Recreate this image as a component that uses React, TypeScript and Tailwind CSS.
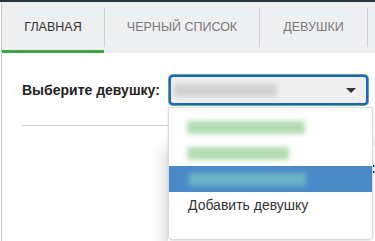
const tabs = [
  { label: "ГЛАВНАЯ", width: "w-[102px]", active: true },
  { label: "ЧЕРНЫЙ СПИСОК", width: "w-[154px]", active: false },
  { label: "ДЕВУШКИ", width: "w-[107px]", active: false },
];

function Tabs() {
  return (
    <div className="flex h-[51px] bg-[#eeeff1]">
      {tabs.map((tab) => (
        <div key={tab.label} className="flex">
          <div
            className={`${tab.width} flex items-center justify-center text-[12.5px] ${
              tab.active
                ? "border-b-[3px] border-[#3ea346] pt-[3px] text-[#333]"
                : "text-[#7a7a7a]"
            }`}>
            {tab.label}
          </div>
          <div className="mt-[6px] h-[39px] w-px bg-[#d0d0d0]" />
        </div>
      ))}
    </div>
  );
}

function Blurred({ w, color }: { w: string; color: string }) {
  return <span className={`block h-[13px] blur-[2.5px] ${w} ${color}`} />;
}

export default function App() {
  return (
    <div className="relative h-[241px] w-[375px] overflow-hidden bg-white font-['Liberation_Sans',Arial,sans-serif]">
      <div className="h-[2px] bg-[#2b333e]" />
      <div className="ml-px h-[239px] border-l border-[#c9c9c9]">
        <Tabs />
        <div className="pl-[20px] pt-[22px]">
          <div className="flex items-center">
            <span className="w-[147px] text-[14px] font-bold text-[#222]">
              Выберите девушку:
            </span>
            <div className="flex h-[30px] w-[199px] items-center justify-between rounded-[4px] border-2 border-[#1c5fd6] bg-[#efefef] pl-[3px] pr-[10px] ring-1 ring-[#56b35a]">
              <Blurred w="w-[103px]" color="bg-[#d2d2d2]" />
              <span className="h-0 w-0 border-x-[5px] border-t-[5px] border-x-transparent border-t-[#333]" />
            </div>
          </div>
          <div className="mt-[20px] h-px w-[160px] bg-[#cfcfcf]" />
        </div>
      </div>

      {/* panel behind the open list */}
      <div className="absolute left-[168px] top-[146px] h-[120px] w-[230px] rounded-xl bg-white shadow-[-6px_-2px_14px_rgba(0,0,0,0.12)]">
        <span className="absolute left-[203px] top-[12px] text-[14px] font-bold text-[#222]">:</span>
      </div>

      {/* open select list */}
      <div className="absolute left-[168px] top-[107px] h-[133px] w-[205px] rounded-b-[5px] border border-[#d9d9d9] bg-white pt-[6px] shadow-sm">
        <div className="flex h-[26px] items-center pl-[18px]">
          <Blurred w="w-[118px]" color="bg-[#b3dcb3]" />
        </div>
        <div className="flex h-[26px] items-center pl-[18px]">
          <Blurred w="w-[102px]" color="bg-[#b3dcb3]" />
        </div>
        <div className="flex h-[26px] items-center bg-[#4a8ac8] pl-[20px]">
          <Blurred w="w-[117px]" color="bg-[#6cb3c4]" />
        </div>
        <div className="flex h-[26px] items-center pl-[19px] text-[14px] text-[#333]">
          Добавить девушку
        </div>
      </div>
    </div>
  );
}
